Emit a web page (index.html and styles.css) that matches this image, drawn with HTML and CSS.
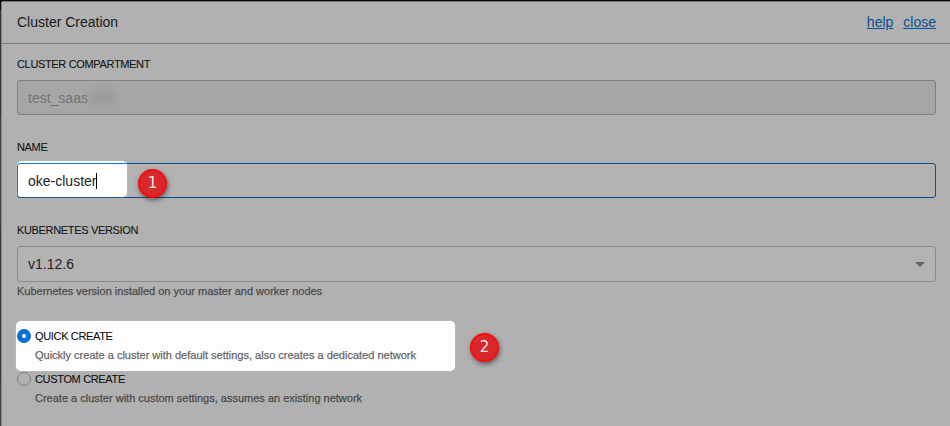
FILE: index.html
```html
<!DOCTYPE html>
<html lang="en">
<head>
<meta charset="utf-8">
<title>Cluster Creation</title>
<link rel="stylesheet" href="styles.css">
</head>
<body>
<main class="dialog">
  <header class="header">
    <h1 class="title">Cluster Creation</h1>
    <nav class="links"><a class="help" href="#">help</a><a class="close" href="#">close</a></nav>
  </header>
  <form class="form">
    <section class="field">
      <div class="label compartment">CLUSTER COMPARTMENT</div>
      <div class="input disabled"><span>test_saas</span><i class="redacted"></i></div>
    </section>
    <section class="field">
      <div class="label name">NAME</div>
      <div class="input focused">
        <div class="spotlight name-spotlight"><div class="lit-border"></div></div>
        <span class="value">oke-cluster</span><i class="caret"></i>
        <div class="badge badge-one"><span>1</span></div>
      </div>
    </section>
    <section class="field version">
      <div class="label kubernetes">KUBERNETES VERSION</div>
      <div class="input select"><span class="number">v1.12.6</span><svg class="arrow" width="10" height="5" viewBox="0 0 10 5"><path d="M0 0h10L5 5z" fill="#656565"/></svg></div>
      <div class="hint version-hint">Kubernetes version installed on your master and worker nodes</div>
    </section>
    <section class="options">
      <div class="spotlight option-spotlight"></div>
      <div class="option">
        <i class="radio checked"></i>
        <div class="option-text"><div class="option-label quick">QUICK CREATE</div><div class="hint quick-hint">Quickly create a cluster with default settings, also creates a dedicated network</div></div>
      </div>
      <div class="option">
        <i class="radio"></i>
        <div class="option-text"><div class="option-label custom">CUSTOM CREATE</div><div class="hint custom-hint">Create a cluster with custom settings, assumes an existing network</div></div>
      </div>
      <div class="badge badge-two"><span>2</span></div>
    </section>
  </form>
</main>
</body>
</html>
```
FILE: styles.css
```css
* { box-sizing: border-box; }
body {
  margin: 0;
  height: 426px;
  overflow: hidden;
  padding: 1px 0 0 1px;
  background: linear-gradient(#08080c 0 10px, #353536 10px 115px, #4b4036 115px 230px, #3c3734 230px 380px, #4a4037 380px);
  font-family: "Liberation Sans", Arial, sans-serif;
}
.dialog {
  height: 425px;
  background: #b1b1b1;
  border-top: 1px solid #77777a;
  border-left: 1px solid #858585;
  border-top-left-radius: 2px;
  overflow: hidden;
}
.header {
  height: 42px;
  display: flex;
  justify-content: space-between;
  align-items: center;
  padding: 0 14px 2px 15px;
  border-bottom: 1px solid #7c7e82;
}
.title { margin: 0; font-size: 14px; font-weight: 400; line-height: 16px; color: #1b1b1b; }
.links { display: flex; gap: 10px; font-size: 14px; line-height: 16px; }
.links a { color: #0b5093; }
.form { padding: 0 14px 0 15px; }
.field { height: 83px; padding-top: 14px; }
.label { height: 22px; font-size: 11px; line-height: 13px; letter-spacing: -.34px; color: #161616; white-space: nowrap; -webkit-text-stroke: .1px; }
.input {
  position: relative;
  height: 35px;
  display: flex;
  align-items: center;
  padding: 0 10px;
  border: 1px solid #7e8086;
  border-radius: 3px;
  background: #b3b3b3;
  font-size: 14px;
  line-height: 16px;
  color: #242424;
}
.disabled { background: #a6a6a6; color: #757575; }
.redacted { width: 24px; height: 12px; margin-left: 3px; background: #999; filter: blur(4px); }
.focused { border-color: #0b5093; }
.value { position: relative; color: #222; }
.caret { position: relative; width: 1px; height: 16px; background: #000; }
.spotlight { position: absolute; background: #fdfdfd; border-radius: 5px; box-shadow: 0 0 1px #e5e5e5; }
.name-spotlight { left: -1px; top: -3px; width: 110px; height: 36px; overflow: hidden; background: #fff; }
.lit-border { width: 140px; height: 35px; margin-top: 2px; border: 1px solid #1474c9; border-radius: 3px; }
.select { height: 36px; justify-content: space-between; border-color: #8c8c8c; }
.arrow { display: block; }
.hint { font-size: 11px; line-height: 13px; white-space: nowrap; color: #4c4c4c; -webkit-text-stroke: .25px; }
.version { height: 105px; }
.version-hint { margin-top: 3px; }
.options { position: relative; padding-top: 14px; }
.option { position: relative; height: 43px; display: flex; gap: 4px; }
.option-text { padding-top: 1px; }
.option-label { font-size: 11px; line-height: 13px; letter-spacing: -.34px; color: #111; white-space: nowrap; -webkit-text-stroke: .1px; }
.option .hint { margin-top: 6px; }
.radio { width: 14px; height: 14px; border: 1px solid #7e7e84; border-radius: 50%; }
.checked { border: 5px solid #0572ce; background: #fff; }
.option-spotlight { left: -1px; top: 6px; width: 439px; height: 50px; }
.option .quick-hint { color: #686868; }
.badge {
  position: absolute;
  width: 29px;
  height: 29px;
  display: flex;
  align-items: center;
  justify-content: center;
  padding-bottom: 1px;
  border: 2px solid #fb0c10;
  border-radius: 50%;
  background: #d7282b;
  box-shadow: 1px 2px 5px rgb(0 0 0 / 50%);
  color: #f8e8e8;
  font: 15px/18px "DejaVu Sans", sans-serif;
}
.badge-one { left: 120px; top: 5px; }
.badge-two { left: 453px; top: 18px; }
```
